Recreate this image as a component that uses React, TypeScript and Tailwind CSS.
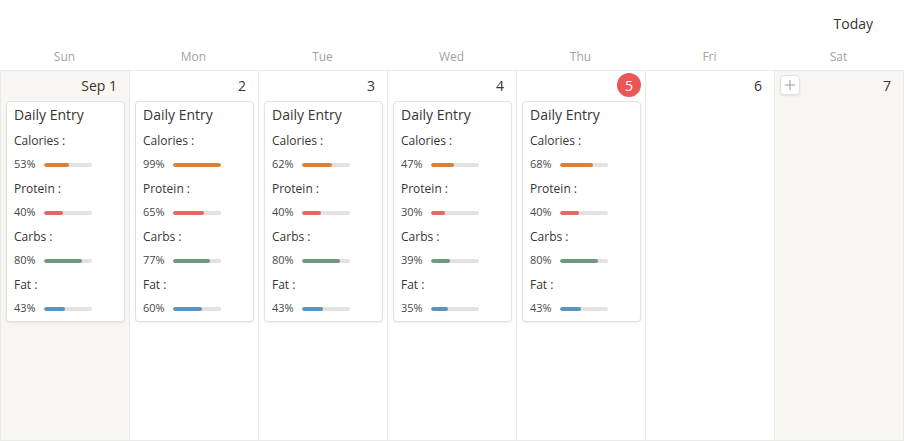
import { Plus } from 'lucide-react'

type Entry = { calories: number; protein: number; carbs: number; fat: number }

type Day = {
  name: string
  label: string
  weekend?: boolean
  today?: boolean
  entry?: Entry
}

const days: Day[] = [
  { name: 'Sun', label: 'Sep 1', weekend: true, entry: { calories: 53, protein: 40, carbs: 80, fat: 43 } },
  { name: 'Mon', label: '2', entry: { calories: 99, protein: 65, carbs: 77, fat: 60 } },
  { name: 'Tue', label: '3', entry: { calories: 62, protein: 40, carbs: 80, fat: 43 } },
  { name: 'Wed', label: '4', entry: { calories: 47, protein: 30, carbs: 39, fat: 35 } },
  { name: 'Thu', label: '5', today: true, entry: { calories: 68, protein: 40, carbs: 80, fat: 43 } },
  { name: 'Fri', label: '6' },
  { name: 'Sat', label: '7', weekend: true },
]

const metrics: { key: keyof Entry; label: string; color: string }[] = [
  { key: 'calories', label: 'Calories :', color: 'bg-[#d9803a]' },
  { key: 'protein', label: 'Protein :', color: 'bg-[#e16b5e]' },
  { key: 'carbs', label: 'Carbs :', color: 'bg-[#6b9a7a]' },
  { key: 'fat', label: 'Fat :', color: 'bg-[#5a93bd]' },
]

function EntryCard({ entry }: { entry: Entry }) {
  return (
    <div className="ml-[5px] mr-[4px] mt-1 rounded-[4px] border border-[#e3e2df] bg-white px-[7px] pt-[3px] shadow-[0_1px_2px_rgba(15,15,15,0.08)]">
      <div className="text-[14px] leading-5 text-[#37352f]">Daily Entry</div>
      <div className="mt-1 flex flex-col">
        {metrics.map((m) => (
          <div key={m.key} className="flex flex-col">
            <div className="h-6 pt-1 text-[12px] leading-4 text-[#37352f]">{m.label}</div>
            <div className="h-6 pb-[1px] flex items-center">
              <span className="w-[30px] text-[11px] text-[#4a4843]">{entry[m.key]}%</span>
              <div className="w-12 h-1 rounded-full bg-[#e3e2e0] overflow-hidden">
                <div className={`h-full rounded-full ${m.color}`} style={{ width: `${entry[m.key]}%` }}></div>
              </div>
            </div>
          </div>
        ))}
      </div>
    </div>
  )
}

export default function App() {
  return (
    <div
      className="w-[904px] h-[441px] bg-white overflow-hidden text-[#37352f]"
      style={{ fontFamily: '"Open Sans", sans-serif' }}
    >
      <div className="h-[46px] flex items-center justify-end pr-[31px]">
        <span className="text-[14px]">Today</span>
      </div>

      <div className="grid grid-cols-7 h-6 pt-[1px] w-[903px]">
        {days.map((d) => (
          <div key={d.name} className="text-center text-[12px] leading-5 text-[#a5a39f]">
            {d.name}
          </div>
        ))}
      </div>

      <div className="grid grid-cols-7 w-[904px] h-[371px] border-t border-l border-b border-[#e9e9e7]">
        {days.map((d) => (
          <div
            key={d.name}
            className={`border-r border-[#e9e9e7] ${d.weekend ? 'bg-[#f7f6f3]' : 'bg-white'}`}
          >
            <div className="h-[26px] pt-[2px] flex items-start justify-between">
              <div className="pl-[5px]">
                {d.name === 'Sat' && (
                  <div className="w-5 h-5 mt-[2px] rounded-[4px] border border-[#e3e2df] bg-white shadow-[0_1px_2px_rgba(15,15,15,0.1)] flex items-center justify-center text-[#9b9a97]">
                    <Plus size={16} strokeWidth={1.5} />
                  </div>
                )}
              </div>
              {d.today ? (
                <div className="mr-1 w-6 h-6 rounded-full bg-[#eb5757] text-white text-[14px] flex items-center justify-center">
                  {d.label}
                </div>
              ) : (
                <div className="pr-[12px] h-6 flex items-center text-[14px]">{d.label}</div>
              )}
            </div>
            {d.entry && <EntryCard entry={d.entry} />}
          </div>
        ))}
      </div>
    </div>
  )
}
